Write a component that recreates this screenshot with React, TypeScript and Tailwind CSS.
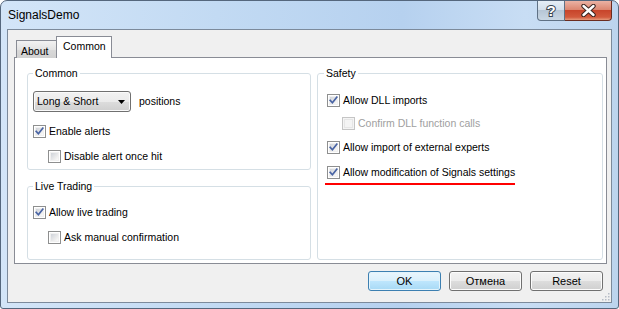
import React from "react";

const font = { fontFamily: '"Liberation Sans", Arial, sans-serif' };

function Check({ checked = false, disabled = false }: { checked?: boolean; disabled?: boolean }) {
  return (
    <div
      className={
        "relative w-[13px] h-[13px] shrink-0 border " +
        (disabled ? "border-[#c5c5c5] bg-[#f4f4f4]" : "border-[#8e8f8f] bg-white")
      }
    >
      <div
        className={
          "absolute left-[1px] top-[1px] w-[9px] h-[9px] border " +
          (disabled
            ? "border-[#e6e6e6] bg-[#f4f4f4]"
            : "border-[#f0f0f0] bg-[linear-gradient(135deg,#cfd3d9,#eeeeee_70%,#fbfbfb)]")
        }
      />
      {checked && (
        <svg className="absolute left-0 top-0" width="11" height="11" viewBox="0 0 11 11">
          <path d="M2.2 5.4 L4.4 7.8 L8.8 2.2" fill="none" stroke="#4863a4" strokeWidth="1.7" strokeLinecap="square" />
        </svg>
      )}
    </div>
  );
}

function Row({ checked, disabled, label, indent = false }: { checked?: boolean; disabled?: boolean; label: string; indent?: boolean }) {
  return (
    <div className={"flex items-center gap-[3px] h-[13px] " + (indent ? "pl-[15px]" : "")}>
      <Check checked={checked} disabled={disabled} />
      <span className={"leading-[13px] whitespace-nowrap " + (disabled ? "text-[#a0a0a0]" : "text-black")}>{label}</span>
    </div>
  );
}

function Btn({ label, primary = false }: { label: string; primary?: boolean }) {
  return (
    <div
      className={
        "w-[73px] h-[20px] rounded-[3px] border flex items-center justify-center text-[11px] text-black " +
        (primary
          ? "border-[#3c7fb1] bg-[linear-gradient(180deg,#eaf6fd_0%,#d9f0fc_50%,#bee6fd_51%,#a7d9f5_100%)] shadow-[inset_0_0_0_1px_#e3f4fc]"
          : "border-[#707070] bg-[linear-gradient(180deg,#f2f2f2_0%,#ebebeb_50%,#dddddd_51%,#cfcfcf_100%)] shadow-[inset_0_0_0_1px_#fcfcfc]")
      }
    >
      {label}
    </div>
  );
}

export default function App() {
  return (
    <div className="w-[619px] h-[309px] bg-white" style={font}>
      <div className="w-[619px] h-[309px] flex flex-col border border-[#55677d] rounded-t-[7px] rounded-b-[3px] bg-[linear-gradient(90deg,#d3e5f8_0%,#c2daf3_35%,#b6d1ef_65%,#c8ddf4_85%,#bcd4ee_100%)] overflow-hidden">
        {/* title bar */}
        <div className="h-[28px] flex items-start shrink-0">
          <div className="h-[28px] flex items-center pl-[7px] text-[12px] text-black">SignalsDemo</div>
          <div className="ml-auto mr-[6px] flex">
            <div className="w-[28px] h-[20px] border border-[#5f7185] border-t-0 rounded-bl-[4px] bg-[linear-gradient(180deg,#e6eef6_0%,#d3dfeb_45%,#b6c6d6_50%,#c9d7e4_100%)] flex items-center justify-center">
              <svg width="14" height="16" viewBox="0 0 14 16">
                <text x="7" y="13" textAnchor="middle" fontSize="15" fontWeight="bold" fontFamily="Liberation Sans, Arial, sans-serif" fill="#ffffff" stroke="#3b4652" strokeWidth="2" paintOrder="stroke">?</text>
              </svg>
            </div>
            <div className="w-[47px] h-[20px] border border-[#6b2c20] border-t-0 border-l-0 rounded-br-[4px] bg-[linear-gradient(180deg,#eab2a4_0%,#dc8771_45%,#c8452b_50%,#d25a3d_85%,#e59a7c_100%)] flex items-center justify-center">
              <svg width="15" height="13" viewBox="0 0 15 13">
                <path d="M2.5 2 L12.5 11 M12.5 2 L2.5 11" stroke="#3a2420" strokeWidth="4.4" strokeLinecap="round" />
                <path d="M2.5 2 L12.5 11 M12.5 2 L2.5 11" stroke="#ffffff" strokeWidth="2.4" strokeLinecap="round" />
              </svg>
            </div>
          </div>
        </div>

        {/* client area */}
        <div className="relative mx-[6px] h-[274px] border border-[#7c8a9b] bg-[#f0f0f0] text-[10.5px] flex flex-col">
          {/* tabs */}
          <div className="pt-[7px] pl-[6px] pr-[4px]">
            <div className="flex items-end h-[21px] pl-[2px] relative z-10 -mb-px">
              <div className="w-[41px] h-[18px] border border-b-0 border-[#898c95] bg-[linear-gradient(180deg,#f2f2f2,#e3e3e3_50%,#d9d9d9_51%,#d1d1d1)] pl-[4px] pt-[4px] leading-[13px] text-black">
                About
              </div>
              <div className="w-[56px] h-[22px] -ml-px border border-b-0 border-[#898c95] bg-white pl-[6px] pt-[3px] leading-[13px] text-black">
                Common
              </div>
            </div>
            {/* panel */}
            <div className="h-[207px] border border-[#898c95] bg-white flex gap-[6px] pl-[12px] pt-[9px]">
              {/* left column */}
              <div className="w-[284px] flex flex-col gap-[10px]">
                <fieldset className="h-[103px] border border-[#d5dfe5] rounded-[3px] pl-[5px]">
                  <legend className="px-[2px] leading-[12px] text-black">Common</legend>
                  <div className="flex items-center mt-[12px]">
                    <div className="w-[98px] h-[21px] rounded-[3px] border border-[#707070] bg-[linear-gradient(180deg,#f2f2f2_0%,#ebebeb_50%,#dddddd_51%,#cfcfcf_100%)] shadow-[inset_0_0_0_1px_#fafafa] flex items-center pl-[3px] pr-[5px]">
                      <span className="text-black">Long &amp; Short</span>
                      <svg className="ml-auto" width="7" height="4" viewBox="0 0 7 4">
                        <path d="M0 0 H7 L3.5 4 Z" fill="#000" />
                      </svg>
                    </div>
                    <span className="ml-[8px] text-black">positions</span>
                  </div>
                  <div className="mt-[13px]">
                    <Row checked label="Enable alerts" />
                  </div>
                  <div className="mt-[12px]">
                    <Row indent label="Disable alert once hit" />
                  </div>
                </fieldset>
                <fieldset className="h-[80px] border border-[#d5dfe5] rounded-[3px] pl-[5px]">
                  <legend className="px-[2px] leading-[12px] text-black">Live Trading</legend>
                  <div className="mt-[14px]">
                    <Row checked label="Allow live trading" />
                  </div>
                  <div className="mt-[12px]">
                    <Row indent label="Ask manual confirmation" />
                  </div>
                </fieldset>
              </div>
              {/* right column */}
              <fieldset className="w-[286px] h-[193px] border border-[#d5dfe5] rounded-[3px] pl-[9px]">
                <legend className="-ml-[3px] px-[2px] leading-[12px] text-black">Safety</legend>
                <div className="mt-[15px]">
                  <Row checked label="Allow DLL imports" />
                </div>
                <div className="mt-[10px]">
                  <Row indent disabled label="Confirm DLL function calls" />
                </div>
                <div className="mt-[11px]">
                  <Row checked label="Allow import of external experts" />
                </div>
                <div className="mt-[12px]">
                  <Row checked label="Allow modification of Signals settings" />
                </div>
                <div className="mt-[4px] -ml-[2px] w-[190px] h-[2px] bg-[#ff0000]" />
              </fieldset>
            </div>
          </div>

          {/* buttons */}
          <div className="flex justify-end gap-[8px] pr-[8px] mt-[7px]">
            <Btn label="OK" primary />
            <Btn label="Отмена" />
            <Btn label="Reset" />
          </div>

          {/* resize grip */}
          <svg className="absolute right-[1px] bottom-[1px]" width="10" height="10" viewBox="0 0 10 10">
            {[
              [8, 2], [8, 5], [8, 8], [5, 5], [5, 8], [2, 8],
            ].map(([x, y], i) => (
              <rect key={i} x={x} y={y} width="1.5" height="1.5" fill="#b6bcc6" />
            ))}
          </svg>
        </div>
      </div>
    </div>
  );
}
